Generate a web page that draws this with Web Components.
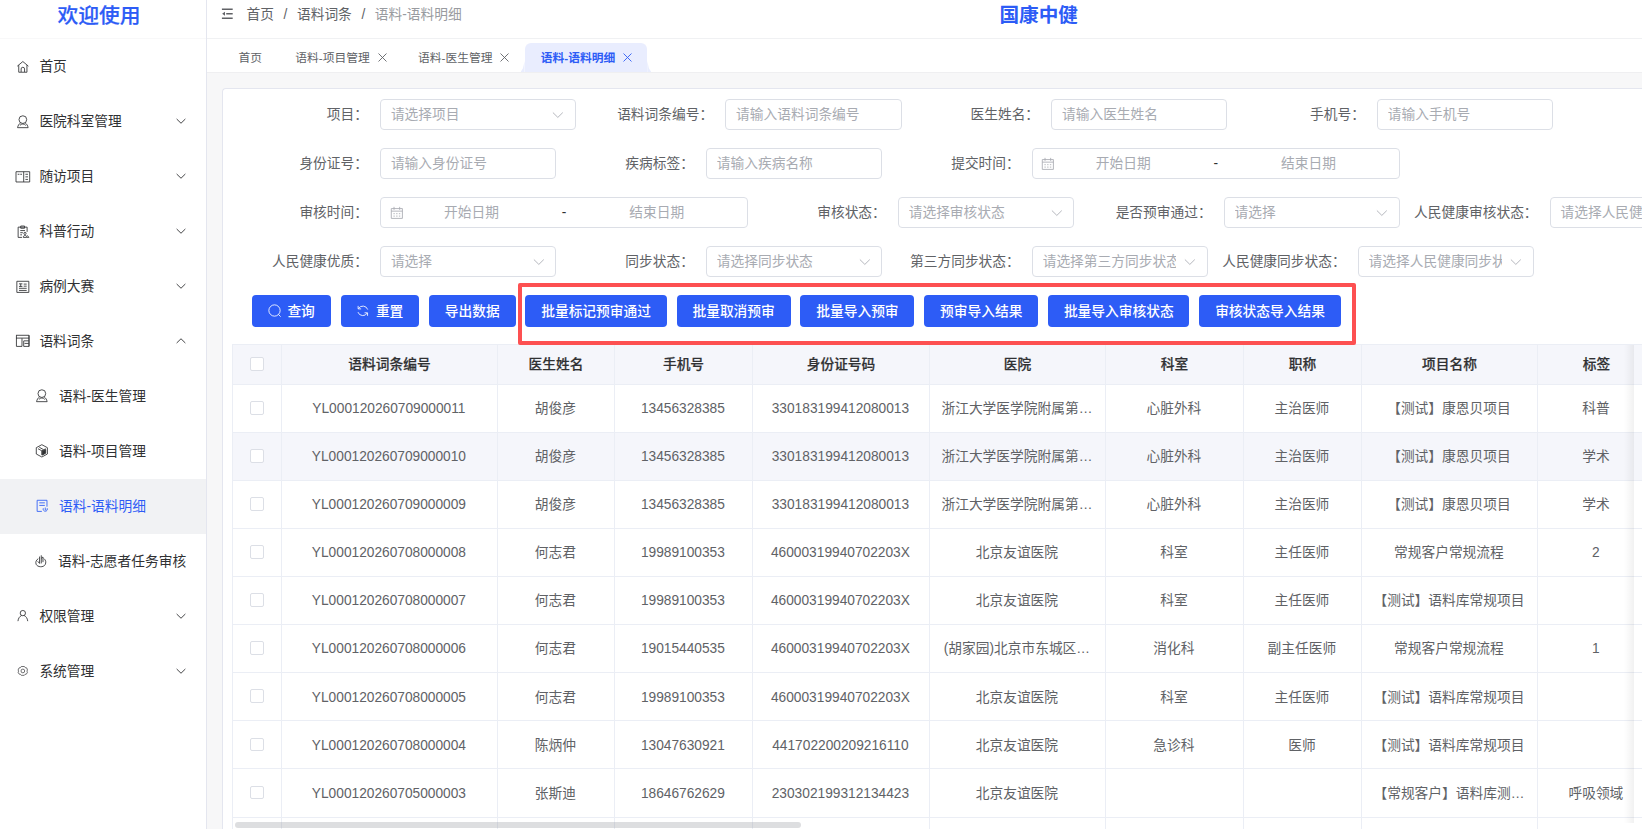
<!DOCTYPE html>
<html lang="zh-CN">
<head>
<meta charset="utf-8">
<title>语料-语料明细</title>
<style>
  body {
    margin: 0;
    width: 1642px;
    height: 829px;
    overflow: hidden;
    font: 13.72px/1.5 "Liberation Sans", "Noto Sans CJK SC", sans-serif;
    color: #303133;
    --primary: #2d5cf6;
    --text: #606266;
    --placeholder: #a8abb2;
    --border: #dcdfe6;
    --line: #ebeef5;
    --fill: #f5f6fb;
    --drop: 2px;
  }
</style>
</head>
<body>
<admin-app></admin-app>

<script>
const ICONS = {
  home: `<path d="M1.5 7.2 8 1.8l6.500 5.400M3.200 6v8.300h9.600V6M6 14v-3.500a2 2 0 0 1 4 0V14"/>`,
  user: `<circle cx="8" cy="5.400" r="4.500"/><path d="M5.300 9.200C3.500 10.500 2.300 12.300 1.800 14.800h12.400c-.5-2.500-1.700-4.300-3.500-5.600M4.600 12.200c1.600-2.300 5.200-2.300 6.800 0"/>`,
  book: `<path d="M0 2h16v12H0zM9 2v12M2 5h2M5 5h2M11 5h3M11 8h3M11 11h3"/>`,
  doc: `<path d="M7 14.500H2.500v-12H13V8M5.500 1.200h4.500v2.600H5.500zM5 6.500h5.500M5 9h3M5 11.500h2"/><circle cx="10.500" cy="9.800" r="1.300"/><path d="M8.500 14.500c0-3 4-3 4 0zM13 12l2 2.500h-2"/>`,
  news: `<path d="M1 1.500h14v13H1zM3.500 4.500h4M5.500 4.500v3.200M3.500 7.500h4M9 4.800h3.500M9 7.200h3.500M3.500 9.700h9M3.500 12.200h9"/>`,
  layout: `<path d="M0 1.500h15.200v13H9V8M.5 1.500v13H7V5M0 4.800h15.200M9.200 8H15M10 11h5M15.200 1.500v13"/>`,
  box: `<path d="M8 .8 14.500 4.300v7.400L8 15.200l-6.500-3.500V4.300zM3.500 5.500 8 8l4.500-2.500M8 8v5M5 3.800l5 2.800"/><path d="M8.500 8.500 12.500 6.500v4.300l-4 2.200z" fill="currentColor"/>`,
  note: `<path d="M8 14.500H2.500v-13H14V9M5 4.500h6.500M5 7.500h6.500"/><path d="M9.700 10.800a2.500 2.500 0 1 0 4.600 0M12 10v2.700h1.300"/>`,
  hand: `<path d="M5 5.500C2.500 7 1.500 9.500 2.500 12c1.500 3.500 8.500 4 10.500.5 1.500-2.500.8-5.500-1.500-7.200M6.500 11V3M8.500 11V1.500M8.500 5l2-1.500v6M4.300 8.500l2.200 2.500"/>`,
  person: `<circle cx="8" cy="4.800" r="3.100"/><path d="M2.300 14.200c.3-3.300 2-5.500 4.200-6.600M9.500 7.600c2.200 1.100 3.900 3.300 4.200 6.600"/>`,
  gear: `<g transform="translate(1.600 1.500) scale(.8)"><path d="M5.700 1.800h4.600l1.200 1.700 2.100.3 1.200 3.100-.9 1.600.9 1.600-1.600 2.800-1.900.3-1.200 1.500H5.700l-1.200-1.500-1.900-.3L1 10.100l.9-1.600L1 6.900l1.500-3.100 2-.3z"/><circle cx="8" cy="8.300" r="2.700"/></g>`,
  down: `<path d="M2.200 5.300 8 11l5.800-5.700"/>`,
  up: `<path d="M2.200 10.700 8 5l5.800 5.700"/>`,
  close: `<path d="M2.200 2.200l11.600 11.600M13.800 2.200 2.200 13.800"/>`,
  fold: `<path d="M.5 1.800h15M6.500 8h9M.5 14.200h15" stroke-width="2"/><path d="M4.800 5.200v5.600L.8 8z" fill="currentColor" stroke="none"/>`,
  calendar: `<path d="M1.500 3h13v11.500h-13zM1.500 6h13M4.700 1v3.500M11.300 1v3.500M4 9h1.600M7.200 9h1.600M10.400 9H12M4 11.800h1.600M7.200 11.800h1.600M10.400 11.800H12"/>`,
  search: `<circle cx="7.600" cy="7.600" r="6.600"/><path d="m12.200 12.200 2.600 2.600"/>`,
  refresh: `<path d="M2.500 2.200v3.500H6M2.800 5.500a6 6 0 0 1 10.900 1M13.500 13.800v-3.500H10M13.200 10.500a6 6 0 0 1-10.900-1"/>`
};

class UiIcon extends HTMLElement {
  connectedCallback() {
    const name = this.getAttribute("name");
    this.attachShadow({ mode: "open" }).innerHTML = /* html */`
    <style>
      :host { display: inline-flex; flex: none; width: 13.7px; height: 13.7px; }
      svg { width: 100%; height: 100%; overflow: visible; }
    </style>
    <svg viewBox="0 0 16 16" fill="none" stroke="currentColor">${ICONS[name]}</svg>`;
    this.shadowRoot.querySelector("svg").style.strokeWidth = this.getAttribute("stroke") ?? "";
  }
}
customElements.define("ui-icon", UiIcon);

class MenuItem extends HTMLElement {
  connectedCallback() {
    const arrow = this.getAttribute("arrow");
    this.attachShadow({ mode: "open" }).innerHTML = /* html */`
    <style>
      :host {
        display: flex;
        align-items: center;
        height: 54.970px;
        box-sizing: border-box;
        padding: 0 19.300px 0 15.600px;
      }
      :host([sub]) { padding-left: 35.300px; }
      :host([active]) { background: #f1f2f4; color: var(--primary); }
      .label { flex: 1; margin-left: 10.100px; padding-top: var(--drop); white-space: nowrap; }
      .arrow { width: 12px; height: 12px; }
    </style>
    <ui-icon name="${this.getAttribute("icon")}"></ui-icon>
    <span class="label"><slot></slot></span>
    ${arrow ? `<ui-icon class="arrow" name="${arrow}" stroke="1.200"></ui-icon>` : ""}`;
  }
}
customElements.define("menu-item", MenuItem);

class SideMenu extends HTMLElement {
  connectedCallback() {
    this.attachShadow({ mode: "open" }).innerHTML = /* html */`
    <style>
      :host {
        display: block;
        flex: none;
        width: 206px;
        border-right: 1px solid #e4e6ef;
        background: #fff;
      }
      .title {
        height: 39px;
        box-sizing: border-box;
        padding: 0 8px 7px 0;
        display: flex;
        align-items: center;
        justify-content: center;
        border-bottom: 1px solid #f8f8f9;
        color: var(--primary);
        font-size: 20.800px;
        font-weight: 500;
        -webkit-text-stroke: .2px;
      }
    </style>
    <div class="title">欢迎使用</div>
    <menu-item icon="home">首页</menu-item>
    <menu-item icon="user" arrow="down">医院科室管理</menu-item>
    <menu-item icon="book" arrow="down">随访项目</menu-item>
    <menu-item icon="doc" arrow="down">科普行动</menu-item>
    <menu-item icon="news" arrow="down">病例大赛</menu-item>
    <menu-item icon="layout" arrow="up">语料词条</menu-item>
    <menu-item sub icon="user">语料-医生管理</menu-item>
    <menu-item sub icon="box">语料-项目管理</menu-item>
    <menu-item sub active icon="note">语料-语料明细</menu-item>
    <menu-item sub icon="hand" style="padding-left: 34.300px">语料-志愿者任务审核</menu-item>
    <menu-item icon="person" arrow="down">权限管理</menu-item>
    <menu-item icon="gear" arrow="down">系统管理</menu-item>`;
  }
}
customElements.define("side-menu", SideMenu);

class TopBar extends HTMLElement {
  connectedCallback() {
    this.attachShadow({ mode: "open" }).innerHTML = /* html */`
    <style>
      :host {
        display: grid;
        grid-template-columns: 739px auto;
        align-items: center;
        height: 39px;
        box-sizing: border-box;
        padding: 0 0 8px 13.500px;
        border-bottom: 1px solid #f0f1f3;
        background: #fff;
      }
      nav { display: flex; align-items: center; color: var(--text); }
      nav ui-icon { width: 12.600px; height: 11.500px; margin: 0 13.400px 2px 0; }
      i { margin: 0 9.600px; font-style: normal; }
      .last { color: #999ba0; }
      .title { padding: 1px 0 0 40px; color: var(--primary); font-size: 19.600px; font-weight: 700; }
    </style>
    <nav>
      <ui-icon name="fold"></ui-icon>
      <span>首页</span><i>/</i><span>语料词条</span><i>/</i><span class="last">语料-语料明细</span>
    </nav>
    <div class="title">国康中健</div>`;
  }
}
customElements.define("top-bar", TopBar);

class PageTab extends HTMLElement {
  connectedCallback() {
    this.attachShadow({ mode: "open" }).innerHTML = /* html */`
    <style>
      :host {
        display: flex;
        align-items: center;
        height: 29px;
        box-sizing: border-box;
        padding: 0 14.300px 0 16.200px;
        position: relative;
        font-size: 11.760px;
        color: var(--text);
      }
      ui-icon { width: 11px; height: 11px; margin-left: 6.800px; }
      :host([active]) {
        background: #e9edfe;
        color: var(--primary);
        font-weight: 700;
        border-radius: 6px 6px 0 0;
      }
      /* flared feet of the active tab */
      :host([active])::before,
      :host([active])::after {
        content: "";
        position: absolute;
        bottom: 0;
        width: 4px;
        height: 11px;
        background: #e9edfe;
      }
      :host([active])::before { left: -4px; clip-path: polygon(100% 0, 100% 100%, 0 100%, 60% 65%); }
      :host([active])::after { right: -4px; clip-path: polygon(0 0, 40% 65%, 100% 100%, 0 100%); }
    </style>
    <slot></slot>${this.hasAttribute("closable") ? `<ui-icon name="close" stroke="1.300"></ui-icon>` : ""}`;
  }
}
customElements.define("page-tab", PageTab);

class TabBar extends HTMLElement {
  connectedCallback() {
    this.attachShadow({ mode: "open" }).innerHTML = /* html */`
    <style>
      :host {
        display: flex;
        align-items: flex-end;
        height: 34px;
        box-sizing: border-box;
        padding-left: 15.300px;
        border-bottom: 1px solid #efeff1;
        background: #fff;
      }
    </style>
    <slot></slot>`;
  }
}
customElements.define("tab-bar", TabBar);

class FormField extends HTMLElement {
  connectedCallback() {
    const type = this.getAttribute("type") ?? "input";
    const hint = this.getAttribute("placeholder");
    const range = `
      <ui-icon name="calendar"></ui-icon>
      <span class="date">开始日期</span><b>-</b><span class="date">结束日期</span>`;
    this.attachShadow({ mode: "open" }).innerHTML = /* html */`
    <style>
      :host { display: flex; flex: none; align-items: center; --width: 176.400px; }
      :host([type="range"]) { --width: 368.300px; }
      :host([wide]) { --width: 195.700px; }
      label {
        width: 149.500px;
        box-sizing: border-box;
        padding: var(--drop) 12px 0 0;
        display: flex;
        justify-content: flex-end;
        white-space: nowrap;
        color: var(--text);
      }
      .box {
        width: var(--width);
        height: 31.360px;
        box-sizing: border-box;
        display: flex;
        align-items: center;
        padding: 0 10px 0 9.900px;
        border: 1px solid var(--border);
        border-radius: 4px;
        background: #fff;
        color: var(--placeholder);
      }
      .hint { flex: 1; overflow: hidden; padding-top: var(--drop); white-space: nowrap; }
      .hint + ui-icon { margin-left: 7.500px; }
      .range { padding: 0 8.600px; }
      .date { width: 136.300px; padding-top: var(--drop); text-align: center; }
      b { width: 49px; padding-top: var(--drop); text-align: center; font-weight: 400; color: #303133; }
    </style>
    <label>${this.getAttribute("label")}：</label>
    <div class="box ${type}">
      ${type === "range" ? range : `<span class="hint">${hint}</span>`}
      ${type === "select" ? `<ui-icon name="down"></ui-icon>` : ""}
    </div>`;
  }
}
customElements.define("form-field", FormField);

class UiButton extends HTMLElement {
  connectedCallback() {
    const icon = this.getAttribute("icon");
    this.attachShadow({ mode: "open" }).innerHTML = /* html */`
    <style>
      :host {
        display: inline-flex;
        align-items: center;
        gap: 5.900px;
        height: 31.400px;
        box-sizing: border-box;
        padding: 0 15.800px;
        border-radius: 4px;
        background: var(--primary);
        color: #fff;
        font-weight: 500;
        white-space: nowrap;
      }
      span { padding-top: var(--drop); }
    </style>
    ${icon ? `<ui-icon name="${icon}"></ui-icon>` : ""}<span><slot></slot></span>`;
  }
}
customElements.define("ui-button", UiButton);

const COLUMNS = ["语料词条编号", "医生姓名", "手机号", "身份证号码", "医院", "科室", "职称", "项目名称", "标签"];

const ROWS = [
  ["YL000120260709000011", "胡俊彦", "13456328385", "330183199412080013", "浙江大学医学院附属第…", "心脏外科", "主治医师", "【测试】康恩贝项目", "科普"],
  ["YL000120260709000010", "胡俊彦", "13456328385", "330183199412080013", "浙江大学医学院附属第…", "心脏外科", "主治医师", "【测试】康恩贝项目", "学术"],
  ["YL000120260709000009", "胡俊彦", "13456328385", "330183199412080013", "浙江大学医学院附属第…", "心脏外科", "主治医师", "【测试】康恩贝项目", "学术"],
  ["YL000120260708000008", "何志君", "19989100353", "46000319940702203X", "北京友谊医院", "科室", "主任医师", "常规客户常规流程", "2"],
  ["YL000120260708000007", "何志君", "19989100353", "46000319940702203X", "北京友谊医院", "科室", "主任医师", "【测试】语料库常规项目", ""],
  ["YL000120260708000006", "何志君", "19015440535", "46000319940702203X", "(胡家园)北京市东城区…", "消化科", "副主任医师", "常规客户常规流程", "1"],
  ["YL000120260708000005", "何志君", "19989100353", "46000319940702203X", "北京友谊医院", "科室", "主任医师", "【测试】语料库常规项目", ""],
  ["YL000120260708000004", "陈炳仲", "13047630921", "441702200209216110", "北京友谊医院", "急诊科", "医师", "【测试】语料库常规项目", ""],
  ["YL000120260705000003", "张斯迪", "18646762629", "230302199312134423", "北京友谊医院", "", "", "【常规客户】语料库测…", "呼吸领域"],
  ["", "", "", "", "", "", "", "", ""]
];

class DataTable extends HTMLElement {
  connectedCallback() {
    this.attachShadow({ mode: "open" });
    this.render();
  }

  row(cells, kind) {
    return `<div class="row ${kind}"><div class="check"><i></i></div>${cells.map(c => `<div>${c}</div>`).join("")}</div>`;
  }

  render() {
    this.shadowRoot.innerHTML = /* html */`
    <style>
      :host {
        display: block;
        flex: 1;
        min-height: 0;
        overflow: hidden;
        position: relative;
        border: solid var(--line);
        border-width: 1px 0 0 1px;
        color: var(--text);
      }
      .row {
        display: grid;
        grid-template-columns: 49px 216px 117px 138px 177px 176px 138px 118px 176px 118px;
        height: 48.080px;
      }
      .row > div {
        display: flex;
        align-items: center;
        justify-content: center;
        box-sizing: border-box;
        padding: var(--drop) 1.200px 0 0;
        border: solid var(--line);
        border-width: 0 1px 1px 0;
        white-space: nowrap;
      }
      .row > .check { padding: 0 0 1px; }
      .row.head {
        height: 40px;
        background: var(--fill);
        color: #303133;
        font-weight: 500;
        -webkit-text-stroke: .2px;
      }
      .row.head > div { padding-right: 0; }
      .hover { background: var(--fill); }
      i {
        width: 13.700px;
        height: 13.700px;
        box-sizing: border-box;
        border: 1px solid var(--border);
        border-radius: 2px;
        background: #fff;
      }
      .shade {
        position: absolute;
        top: 0;
        bottom: 6px;
        left: 1391px;
        width: 10px;
        background: linear-gradient(to right, #0000, #0000000e);
      }
      .thumb {
        position: absolute;
        left: 2px;
        bottom: 1px;
        width: 566px;
        height: 6px;
        border-radius: 3px;
        background: #909399;
        opacity: .3;
      }
    </style>
    ${this.row(COLUMNS, "head")}
    ${ROWS.map((cells, i) => this.row(cells, i === 1 ? "hover" : "")).join("")}
    <div class="shade"></div>
    <div class="thumb"></div>`;
  }
}
customElements.define("data-table", DataTable);

class AdminApp extends HTMLElement {
  connectedCallback() {
    this.attachShadow({ mode: "open" }).innerHTML = /* html */`
    <style>
      :host { display: flex; width: 1642px; height: 829px; overflow: hidden; background: #f7f7f8; }
      main { flex: 1; min-width: 0; display: flex; flex-direction: column; }
      .card {
        flex: 1;
        min-height: 0;
        display: flex;
        flex-direction: column;
        margin: 15px 0 0 15px;
        border: solid #e4e6ef;
        border-width: 1px 0 0 1px;
        border-radius: 4px 0 0 0;
        background: #fff;
        overflow: hidden;
      }
      .form { display: grid; gap: 17.640px; padding: 10px 0 0 7.500px; }
      .line { display: flex; }
      .actions {
        display: flex;
        gap: 9.900px;
        padding: 17.800px 0 0 29px;
        height: 66.500px;
        box-sizing: border-box;
        align-items: flex-start;
        position: relative;
      }
      /* red frame over the batch buttons */
      .mark {
        position: absolute;
        left: 294.500px;
        top: 6px;
        width: 838.300px;
        height: 61.500px;
        box-sizing: border-box;
        border: 4px solid #fd5051;
        border-radius: 2px;
        z-index: 1;
      }
      data-table { margin-left: 9px; }
    </style>
    <side-menu></side-menu>
    <main>
      <top-bar></top-bar>
      <tab-bar>
        <page-tab>首页</page-tab>
        <page-tab closable style="margin-left: 2.900px">语料-项目管理</page-tab>
        <page-tab closable>语料-医生管理</page-tab>
        <page-tab closable active>语料-语料明细</page-tab>
      </tab-bar>
      <section class="card">
        <div class="form">
          <div class="line">
            <form-field type="select" wide label="项目" placeholder="请选择项目"></form-field>
            <form-field label="语料词条编号" placeholder="请输入语料词条编号"></form-field>
            <form-field label="医生姓名" placeholder="请输入医生姓名"></form-field>
            <form-field label="手机号" placeholder="请输入手机号"></form-field>
          </div>
          <div class="line">
            <form-field label="身份证号" placeholder="请输入身份证号"></form-field>
            <form-field label="疾病标签" placeholder="请输入疾病名称"></form-field>
            <form-field type="range" label="提交时间"></form-field>
          </div>
          <div class="line">
            <form-field type="range" label="审核时间"></form-field>
            <form-field type="select" label="审核状态" placeholder="请选择审核状态"></form-field>
            <form-field type="select" label="是否预审通过" placeholder="请选择"></form-field>
            <form-field type="select" label="人民健康审核状态" placeholder="请选择人民健康审核状态"></form-field>
          </div>
          <div class="line">
            <form-field type="select" label="人民健康优质" placeholder="请选择"></form-field>
            <form-field type="select" label="同步状态" placeholder="请选择同步状态"></form-field>
            <form-field type="select" label="第三方同步状态" placeholder="请选择第三方同步状态"></form-field>
            <form-field type="select" label="人民健康同步状态" placeholder="请选择人民健康同步状态"></form-field>
          </div>
        </div>
        <div class="actions">
          <ui-button icon="search">查询</ui-button>
          <ui-button icon="refresh">重置</ui-button>
          <ui-button>导出数据</ui-button>
          <ui-button>批量标记预审通过</ui-button>
          <ui-button>批量取消预审</ui-button>
          <ui-button>批量导入预审</ui-button>
          <ui-button>预审导入结果</ui-button>
          <ui-button>批量导入审核状态</ui-button>
          <ui-button>审核状态导入结果</ui-button>
          <div class="mark"></div>
        </div>
        <data-table></data-table>
      </section>
    </main>`;
  }
}
customElements.define("admin-app", AdminApp);
</script>
</body>
</html>
